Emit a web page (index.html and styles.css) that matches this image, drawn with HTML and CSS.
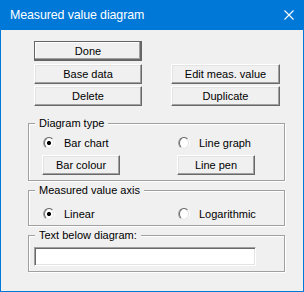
FILE: index.html
```html
<!DOCTYPE html>
<html>
<head>
<meta charset="utf-8">
<title>Measured value diagram</title>
<link rel="stylesheet" href="styles.css">
</head>
<body>
<div class="window">
  <div class="titlebar">
    <span class="title">Measured value diagram</span>
    <svg class="close" width="10" height="10" viewBox="0 0 10 10"><path d="M0.5 0.5 L9.5 9.5 M9.5 0.5 L0.5 9.5" stroke="#fff" stroke-width="1.1" fill="none"/></svg>
  </div>
  <div class="client">
    <div class="actions">
      <button class="btn btn-default first-row">Done</button>
      <button class="btn">Base data</button>
      <button class="btn">Edit meas. value</button>
      <button class="btn">Delete</button>
      <button class="btn">Duplicate</button>
    </div>

    <fieldset class="group group-type">
      <legend>Diagram type</legend>
      <div class="group-grid">
        <label class="option"><span class="radio checked"></span>Bar chart</label>
        <label class="option"><span class="radio"></span>Line graph</label>
        <button class="btn small">Bar colour</button>
        <button class="btn small">Line pen</button>
      </div>
    </fieldset>

    <fieldset class="group group-axis">
      <legend>Measured value axis</legend>
      <div class="group-grid">
        <label class="option"><span class="radio checked"></span>Linear</label>
        <label class="option"><span class="radio"></span>Logarithmic</label>
      </div>
    </fieldset>

    <fieldset class="group group-text">
      <legend>Text below diagram:</legend>
      <div class="text-row"><input class="textbox" type="text"></div>
    </fieldset>
  </div>
</div>
</body>
</html>
```

FILE: styles.css
```css
* { box-sizing: border-box; }
html, body { margin: 0; padding: 0; }
body {
  font-family: "Liberation Sans", Arial, sans-serif;
  font-size: 11px;
  color: #000;
  background: #f0f0f0;
}
.window {
  width: 304px;
  height: 292px;
  border: 1px solid #0078d7;
  border-top: 0;
  background: #f0f0f0;
  display: flex;
  flex-direction: column;
}
.titlebar {
  height: 30px;
  background: #0078d7;
  display: flex;
  align-items: center;
  justify-content: space-between;
  padding: 0 9px 0 9px;
  color: #fff;
  flex: none;
}
.title {
  font-size: 12.4px;
  letter-spacing: -0.1px;
}
.close { display: block; margin-top: 0; }
.client {
  flex: 1;
  padding: 11px 0 0 0;
}
.actions {
  display: grid;
  grid-template-columns: 108px 109px;
  grid-template-rows: 21px 20px 20px;
  column-gap: 29px;
  row-gap: 2px;
  margin-left: 33px;
}
.first-row { grid-column: 1 / -1; width: 108px; }
.btn {
  font: inherit;
  color: #000;
  height: 20px;
  padding: 0;
  margin: 0;
  background: #f0f0f0;
  border: 1px solid;
  border-color: #fff #696969 #696969 #fff;
  box-shadow: inset -1px -1px #a0a0a0, inset 1px 1px #e3e3e3;
  display: flex;
  align-items: center;
  justify-content: center;
  line-height: 1;
}
.btn-default {
  border: 1px solid #646464;
  box-shadow: inset -1px -1px #696969, inset -2px -2px #a0a0a0, inset 1px 1px #fff;
}
.group {
  margin: 0 0 0 27px;
  width: 257px;
  padding: 0;
  border: 1px solid #a0a0a0;
  box-shadow: 1px 1px 0 #fff, inset 1px 1px 0 #fff;
  min-width: 0;
}
.group legend {
  margin-left: 6px;
  padding: 0 4px;
  line-height: 14px;
  background: #f0f0f0;
}
.group-type { margin-top: 10px; }
.group-axis, .group-text { margin-top: 2px; }
.group-grid {
  display: grid;
  grid-template-columns: 135px 100px;
  padding-left: 13px;
}
.group-type .group-grid {
  padding-top: 7px;
  padding-bottom: 5px;
  grid-template-rows: 12px 20px;
  row-gap: 6px;
}
.group-axis .group-grid {
  padding-top: 11px;
  padding-bottom: 5px;
  grid-template-rows: 12px;
}
.option {
  display: flex;
  align-items: center;
  gap: 9px;
  padding-left: 1px;
  height: 12px;
  white-space: nowrap;
}
.btn.small { width: 78px; }
.radio {
  width: 12px;
  height: 12px;
  border-radius: 50%;
  border: 1px solid;
  border-color: #a0a0a0 #fff #fff #a0a0a0;
  display: flex;
  align-items: center;
  justify-content: center;
  flex: none;
}
.radio::before {
  content: "";
  width: 10px;
  height: 10px;
  border-radius: 50%;
  border: 1px solid;
  border-color: #696969 #e3e3e3 #e3e3e3 #696969;
  background: #fff;
  display: flex;
}
.radio.checked::before {
  background: radial-gradient(circle at 50% 50%, #000 0, #000 2px, #fff 2.2px);
}
.text-row {
  padding: 5px 0 5px 5px;
}
.textbox {
  display: block;
  width: 222px;
  height: 19px;
  margin: 0;
  padding: 0 2px;
  font: inherit;
  background: #fff;
  border: 1px solid;
  border-color: #a0a0a0 #fff #fff #a0a0a0;
  box-shadow: inset 1px 1px #696969, inset -1px -1px #e3e3e3;
  outline: none;
}
```
